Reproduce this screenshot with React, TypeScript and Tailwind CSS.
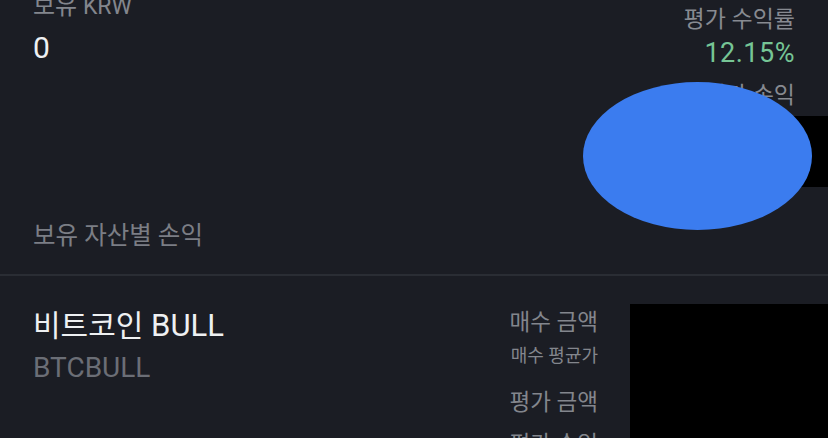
export default function App() {
  return (
    <div
      className="relative h-[438px] w-[828px] overflow-hidden bg-[#1b1d24]"
      style={{ fontFamily: 'Roboto, "Noto Sans CJK KR", sans-serif' }}
    >
      {/* summary */}
      <div className="flex justify-between pl-[33px]">
        <div className="flex flex-col">
          <div className="-mt-[9px] text-[23px] leading-[30px] text-[#83868d]">
            <span className="text-[24px]">보유</span> KRW
          </div>
          <div className="mt-[8px] text-[30px] leading-[36px] text-[#eef0f2]">0</div>
        </div>
        <div className="flex flex-col items-end">
          <div className="mt-[6px] pr-[33px] text-[23px] leading-[28px] text-[#878a91]">평가 수익률</div>
          <div className="mt-[2px] pr-[33px] text-[27px] leading-[34px] tracking-[0.5px] text-[#76c595]">12.15%</div>
          <div className="mt-[12px] pr-[33px] text-[23px] leading-[28px] text-[#878a91]">평가 손익</div>
          <div className="mt-[6px] h-[71px] w-[198px] bg-black" />
        </div>
      </div>

      <div className="mt-[34px] pl-[33px] text-[24.5px] leading-[30px] text-[#7b7e85]">보유 자산별 손익</div>
      <div className="mt-[23px] h-[2px] bg-[#2a2d34]" />

      {/* asset row */}
      <div className="flex pl-[33px]">
        <div className="flex flex-1 flex-col">
          <div className="mt-[33px] text-[31px] leading-[34px] text-[#eef0f2]">
            <span className="text-[30px]">비트코인</span> BULL
          </div>
          <div className="mt-[8px] text-[28px] leading-[34px] text-[#6b6e76]">BTCBULL</div>
        </div>
        <div className="flex flex-col items-end text-[#83868d]">
          <div className="mt-[32px] text-[22.5px] leading-[28px]">매수 금액</div>
          <div className="mt-[9px] text-[18px] leading-[22px]">매수 평균가</div>
          <div className="mt-[21px] text-[22.5px] leading-[28px]">평가 금액</div>
          <div className="mt-[14px] text-[22.5px] leading-[28px]">평가 손익</div>
        </div>
        <div className="ml-[32px] mt-[28px] h-[200px] w-[198px] bg-black" />
      </div>

      {/* redaction blob */}
      <div className="absolute left-[583px] top-[82px] h-[148px] w-[229px] rounded-[50%] bg-[#3b7cef]" />
    </div>
  );
}
